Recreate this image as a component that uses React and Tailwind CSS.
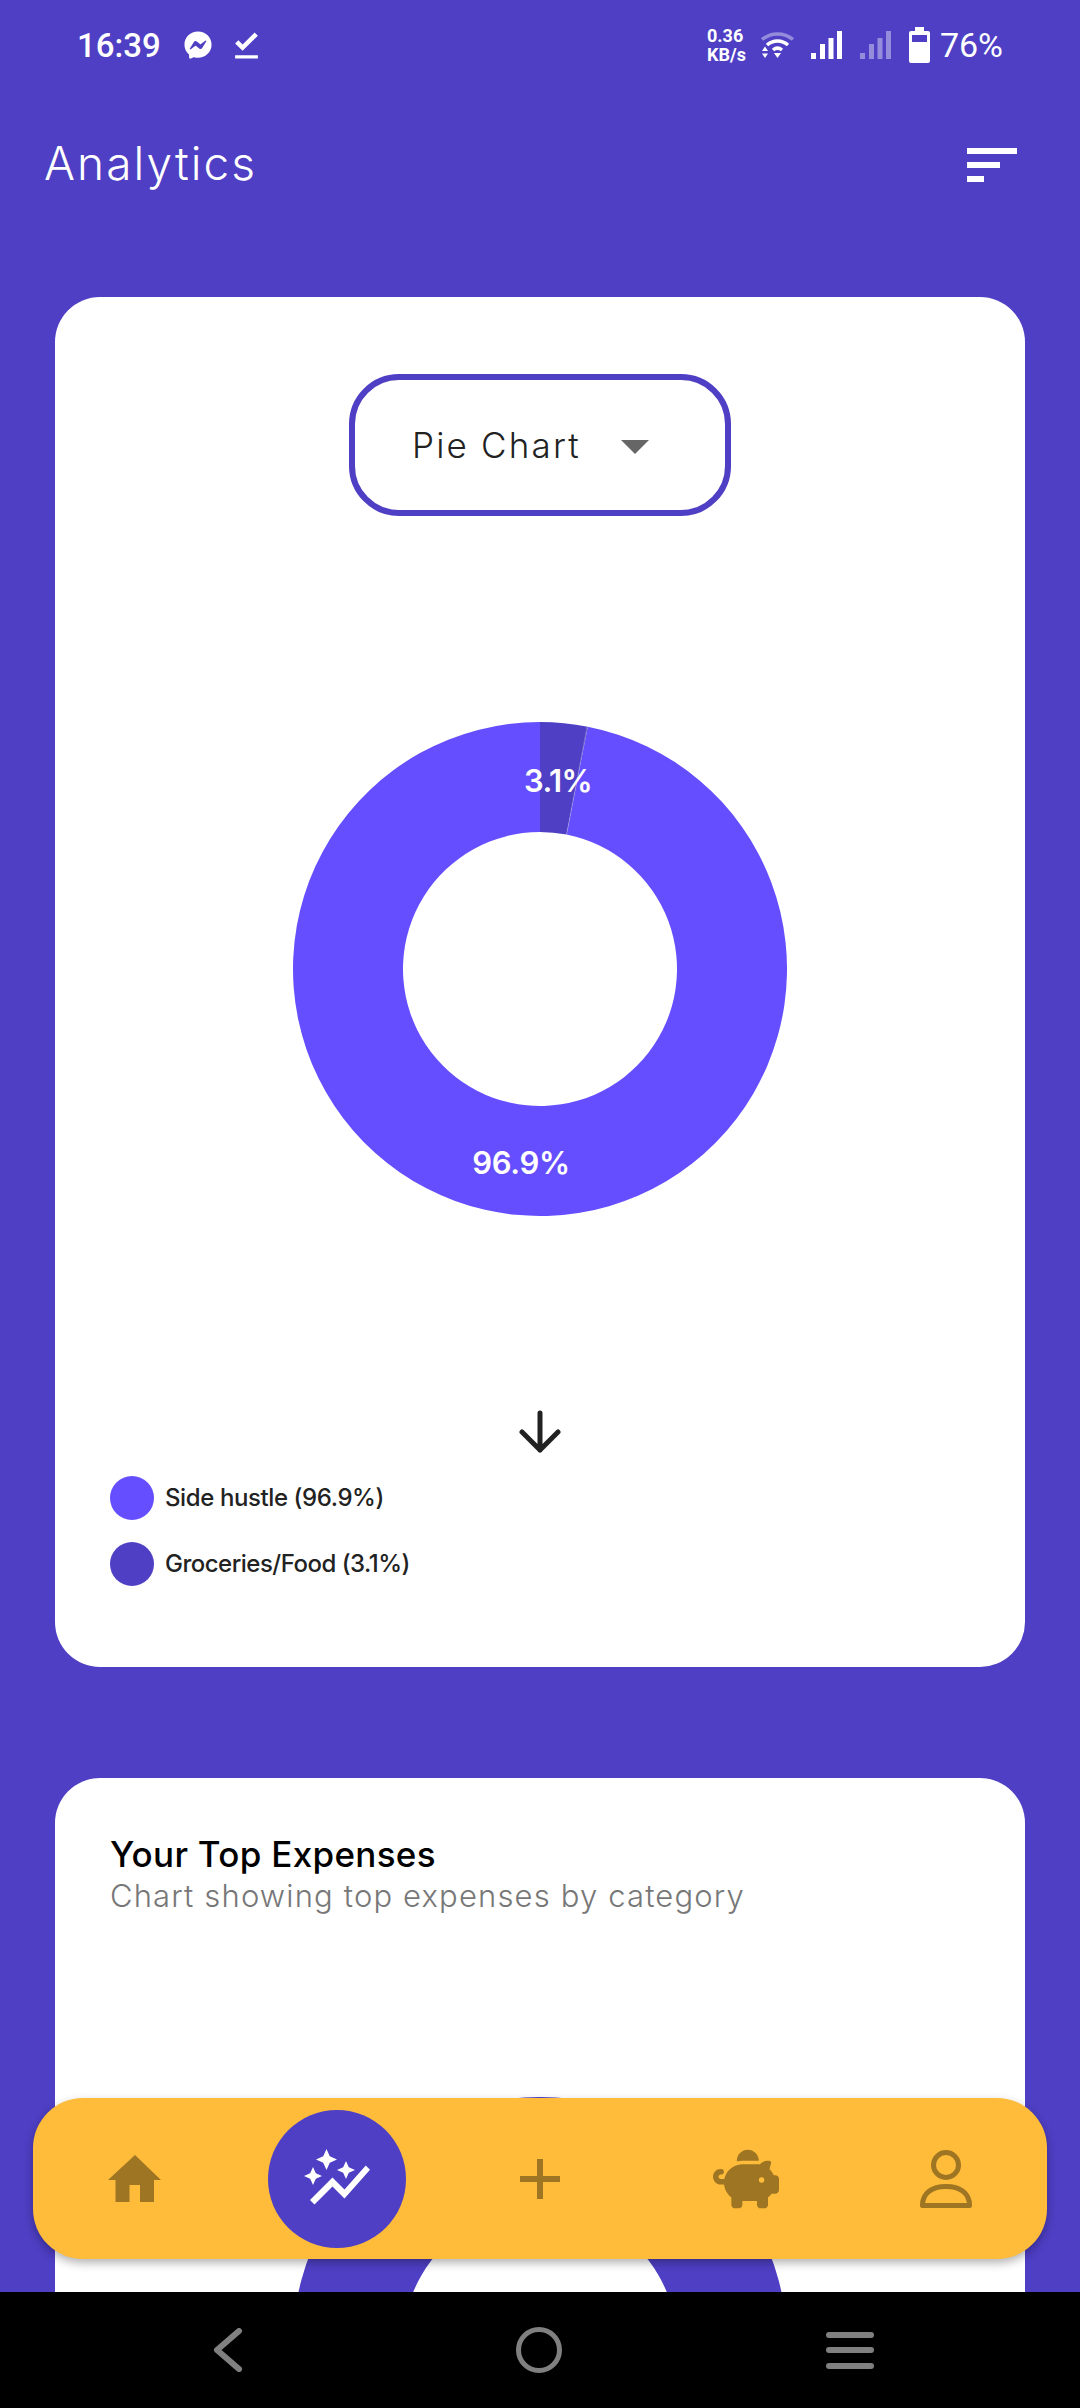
import React from "react";
import { FaFacebookMessenger } from "react-icons/fa";
import { FaPiggyBank } from "react-icons/fa6";
import { MdAutoGraph, MdFileDownloadDone } from "react-icons/md";

const ringPath = (cx, cy, outer, inner, from, to) => {
  const pt = (r, deg) => {
    const a = ((deg - 90) * Math.PI) / 180;
    return `${(cx + r * Math.cos(a)).toFixed(2)} ${(cy + r * Math.sin(a)).toFixed(2)}`;
  };
  const large = to - from > 180 ? 1 : 0;
  return `M${pt(outer, from)} A${outer} ${outer} 0 ${large} 1 ${pt(outer, to)} L${pt(inner, to)} A${inner} ${inner} 0 ${large} 0 ${pt(inner, from)} Z`;
};

function Signal({ className }) {
  return (
    <svg width="31" height="28" viewBox="0 0 31 28" className={className}>
      <rect x="0" y="22" width="5" height="6" fill="currentColor" />
      <rect x="9" y="13" width="5" height="15" fill="currentColor" />
      <rect x="17.500" y="7" width="5" height="21" fill="currentColor" />
      <rect x="26" y="0" width="5" height="28" fill="currentColor" />
    </svg>
  );
}

function StatusBar() {
  return (
    <div className="flex h-[90px] shrink-0 items-center justify-between pl-[77px] pr-[77px] text-white font-['Roboto',sans-serif]">
      <div className="flex items-center">
        <span className="text-[33px] leading-none font-medium">16:39</span>
        <FaFacebookMessenger size={28} className="ml-[23px]" />
        <MdFileDownloadDone size={39} className="ml-[15px]" />
      </div>
      <div className="flex items-center">
        <div className="flex flex-col text-[18px] leading-[19px] font-bold">
          <span>0.36</span>
          <span>KB/s</span>
        </div>
        {/* wifi */}
        <svg width="33" height="28" viewBox="0 0 33 28" fill="none" stroke="currentColor" className="ml-[15px]">
          <path d="M1 8.500 C10 1 23 1 32 8.500" strokeWidth="3.500" className="opacity-40" />
          <path d="M6 14 C12 8.500 21 8.500 27 14" strokeWidth="3.500" />
          <path d="M12 19 C15 16.500 18 16.500 21 19" strokeWidth="3.500" />
          <path d="M1 20 L4 15.500 L7 20 Z M1 22.500 L7 22.500 L4 27 Z M13 22 L20 22 L16.500 27 Z" fill="currentColor" stroke="none" />
        </svg>
        <Signal className="ml-[17px]" />
        <Signal className="ml-[18px] opacity-40" />
        {/* battery */}
        <svg width="21" height="36" viewBox="0 0 21 36" className="ml-[18px]">
          <path
            fillRule="evenodd"
            fill="currentColor"
            d="M6 0h9v4h4a2 2 0 0 1 2 2v28a2 2 0 0 1-2 2H2a2 2 0 0 1-2-2V6a2 2 0 0 1 2-2h4z M3 8v7h15V8z"
          />
        </svg>
        <span className="ml-[10px] text-[34px] leading-none">76%</span>
      </div>
    </div>
  );
}

function PageHeader() {
  return (
    <div className="flex h-[150px] shrink-0 items-center justify-between pl-[44px] pr-[63px]">
      <h1 className="mb-[5px] text-[46px] leading-none font-light tracking-[2.1px] text-white">Analytics</h1>
      <div className="flex w-[50px] flex-col gap-[8px]">
        <div className="h-[6px] w-[50px] bg-white" />
        <div className="h-[6px] w-[33px] bg-white" />
        <div className="h-[6px] w-[17px] bg-white" />
      </div>
    </div>
  );
}

function PieCard() {
  return (
    <div className="h-[1370px] shrink-0 rounded-[45px] bg-white pt-[77px]">
      <div className="mx-auto flex h-[142px] w-[382px] items-center rounded-[50px] border-[6px] border-[#4e3fc4] pl-[57px]">
        <span className="text-[35px] leading-none font-light tracking-[2.2px] text-[#222]">Pie Chart</span>
        <div className="ml-[40px] mt-[3px] h-0 w-0 border-x-[14px] border-t-[14px] border-x-transparent border-t-[#666]" />
      </div>

      <svg width="494" height="494" viewBox="0 0 494 494" className="mx-auto mt-[206px] block">
        <path d={ringPath(247, 247, 247, 137, 11.16, 360)} fill="#654eff" />
        <path d={ringPath(247, 247, 247, 137, 0, 11.16)} fill="#4e3fc4" />
        <line x1="294.800" y1="1" x2="273.600" y2="112.600" stroke="#fff" strokeOpacity="0.25" />
        <text x="265" y="70" textAnchor="middle" fill="#fff" fontSize="31" fontWeight="600" letterSpacing="-0.6">3.1%</text>
        <text x="228" y="452" textAnchor="middle" fill="#fff" fontSize="31" fontWeight="600" letterSpacing="-0.3">96.9%</text>
      </svg>

      <svg width="42" height="43" viewBox="0 0 42 43" fill="none" stroke="#222" strokeWidth="5" strokeLinecap="round" strokeLinejoin="round" className="mx-auto mt-[194px] block">
        <path d="M21 3 V40 M3 22 L21 40 L39 22" />
      </svg>

      <div className="mt-[23px] flex flex-col gap-[22px] pl-[55px]">
        <div className="flex items-center gap-[11px]">
          <div className="h-[44px] w-[44px] rounded-full bg-[#654eff]" />
          <span className="text-[24px] leading-none font-medium tracking-[-0.4px] text-[#222]">Side hustle (96.9%)</span>
        </div>
        <div className="flex items-center gap-[11px]">
          <div className="h-[44px] w-[44px] rounded-full bg-[#4e3fc4]" />
          <span className="text-[24px] leading-none font-medium tracking-[-0.5px] text-[#222]">Groceries/Food (3.1%)</span>
        </div>
      </div>
    </div>
  );
}

function ExpensesCard() {
  return (
    <div className="shrink-0 rounded-[45px] bg-white pl-[55px] pt-[55px]">
      <h2 className="text-[35px] leading-[42px] font-medium tracking-[0.3px] text-black">Your Top Expenses</h2>
      <p className="text-[31px] leading-[42px] font-light tracking-[1.15px] text-[#777]">Chart showing top expenses by category</p>
      <svg width="494" height="494" viewBox="0 0 494 494" className="ml-[183px] mt-[180px] block">
        <path d={ringPath(247, 247, 247, 137, 0, 359.99)} fill="#4e3fc4" />
      </svg>
    </div>
  );
}

function BottomNav() {
  return (
    <div className="absolute bottom-[149px] left-[33px] grid h-[161px] w-[1014px] grid-cols-5 items-center justify-items-center rounded-[50px] bg-[#ffbc3b] text-[#9e7522] shadow-[0_4px_10px_rgba(0,0,0,0.3)]">
      <svg width="53" height="47" viewBox="0 0 53 47">
        <path
          fill="currentColor"
          fillRule="evenodd"
          d="M27 0 L53 25 H46 V47 H32 V30 H21.500 V47 H7.500 V25 H0 Z"
        />
      </svg>
      <div className="flex h-[138px] w-[138px] items-center justify-center rounded-full bg-[#4e3fc4] text-white">
        <MdAutoGraph size={72} />
      </div>
      <svg width="40" height="40" viewBox="0 0 40 40" fill="currentColor">
        <rect x="17" y="0" width="6" height="40" />
        <rect x="0" y="17" width="40" height="6" />
      </svg>
      <FaPiggyBank size={66} className="ml-[6px]" />
      <svg width="52" height="58" viewBox="0 0 52 58" fill="none" stroke="currentColor" strokeWidth="5" strokeLinejoin="round">
        <circle cx="26" cy="15" r="12.500" />
        <path d="M2.500 55.500 C2.500 43 12 36.500 26 36.500 C40 36.500 49.500 43 49.500 55.500 Z" />
      </svg>
    </div>
  );
}

function SystemNav() {
  return (
    <div className="grid h-[116px] shrink-0 grid-cols-3 items-center justify-items-center bg-black pl-[72px] pr-[75px] text-[#808080]">
      <svg width="30" height="44" viewBox="0 0 30 44" fill="none" stroke="currentColor" strokeWidth="6" strokeLinecap="round" strokeLinejoin="round">
        <path d="M26 3 L4 22 L26 41" />
      </svg>
      <div className="h-[46px] w-[46px] rounded-full border-[5px] border-[#808080]" />
      <div className="flex w-[48px] flex-col gap-[9.500px]">
        <div className="h-[6px] rounded-full bg-[#808080]" />
        <div className="h-[6px] rounded-full bg-[#808080]" />
        <div className="h-[6px] rounded-full bg-[#808080]" />
      </div>
    </div>
  );
}

export default function App() {
  return (
    <div className="relative flex h-[2408px] w-[1080px] flex-col overflow-hidden bg-[#4e3fc4] font-['Inter',sans-serif]">
      <StatusBar />
      <PageHeader />
      <div className="mt-[57px] flex min-h-0 flex-1 flex-col gap-[111px] overflow-hidden px-[55px]">
        <PieCard />
        <ExpensesCard />
      </div>
      <BottomNav />
      <SystemNav />
    </div>
  );
}
